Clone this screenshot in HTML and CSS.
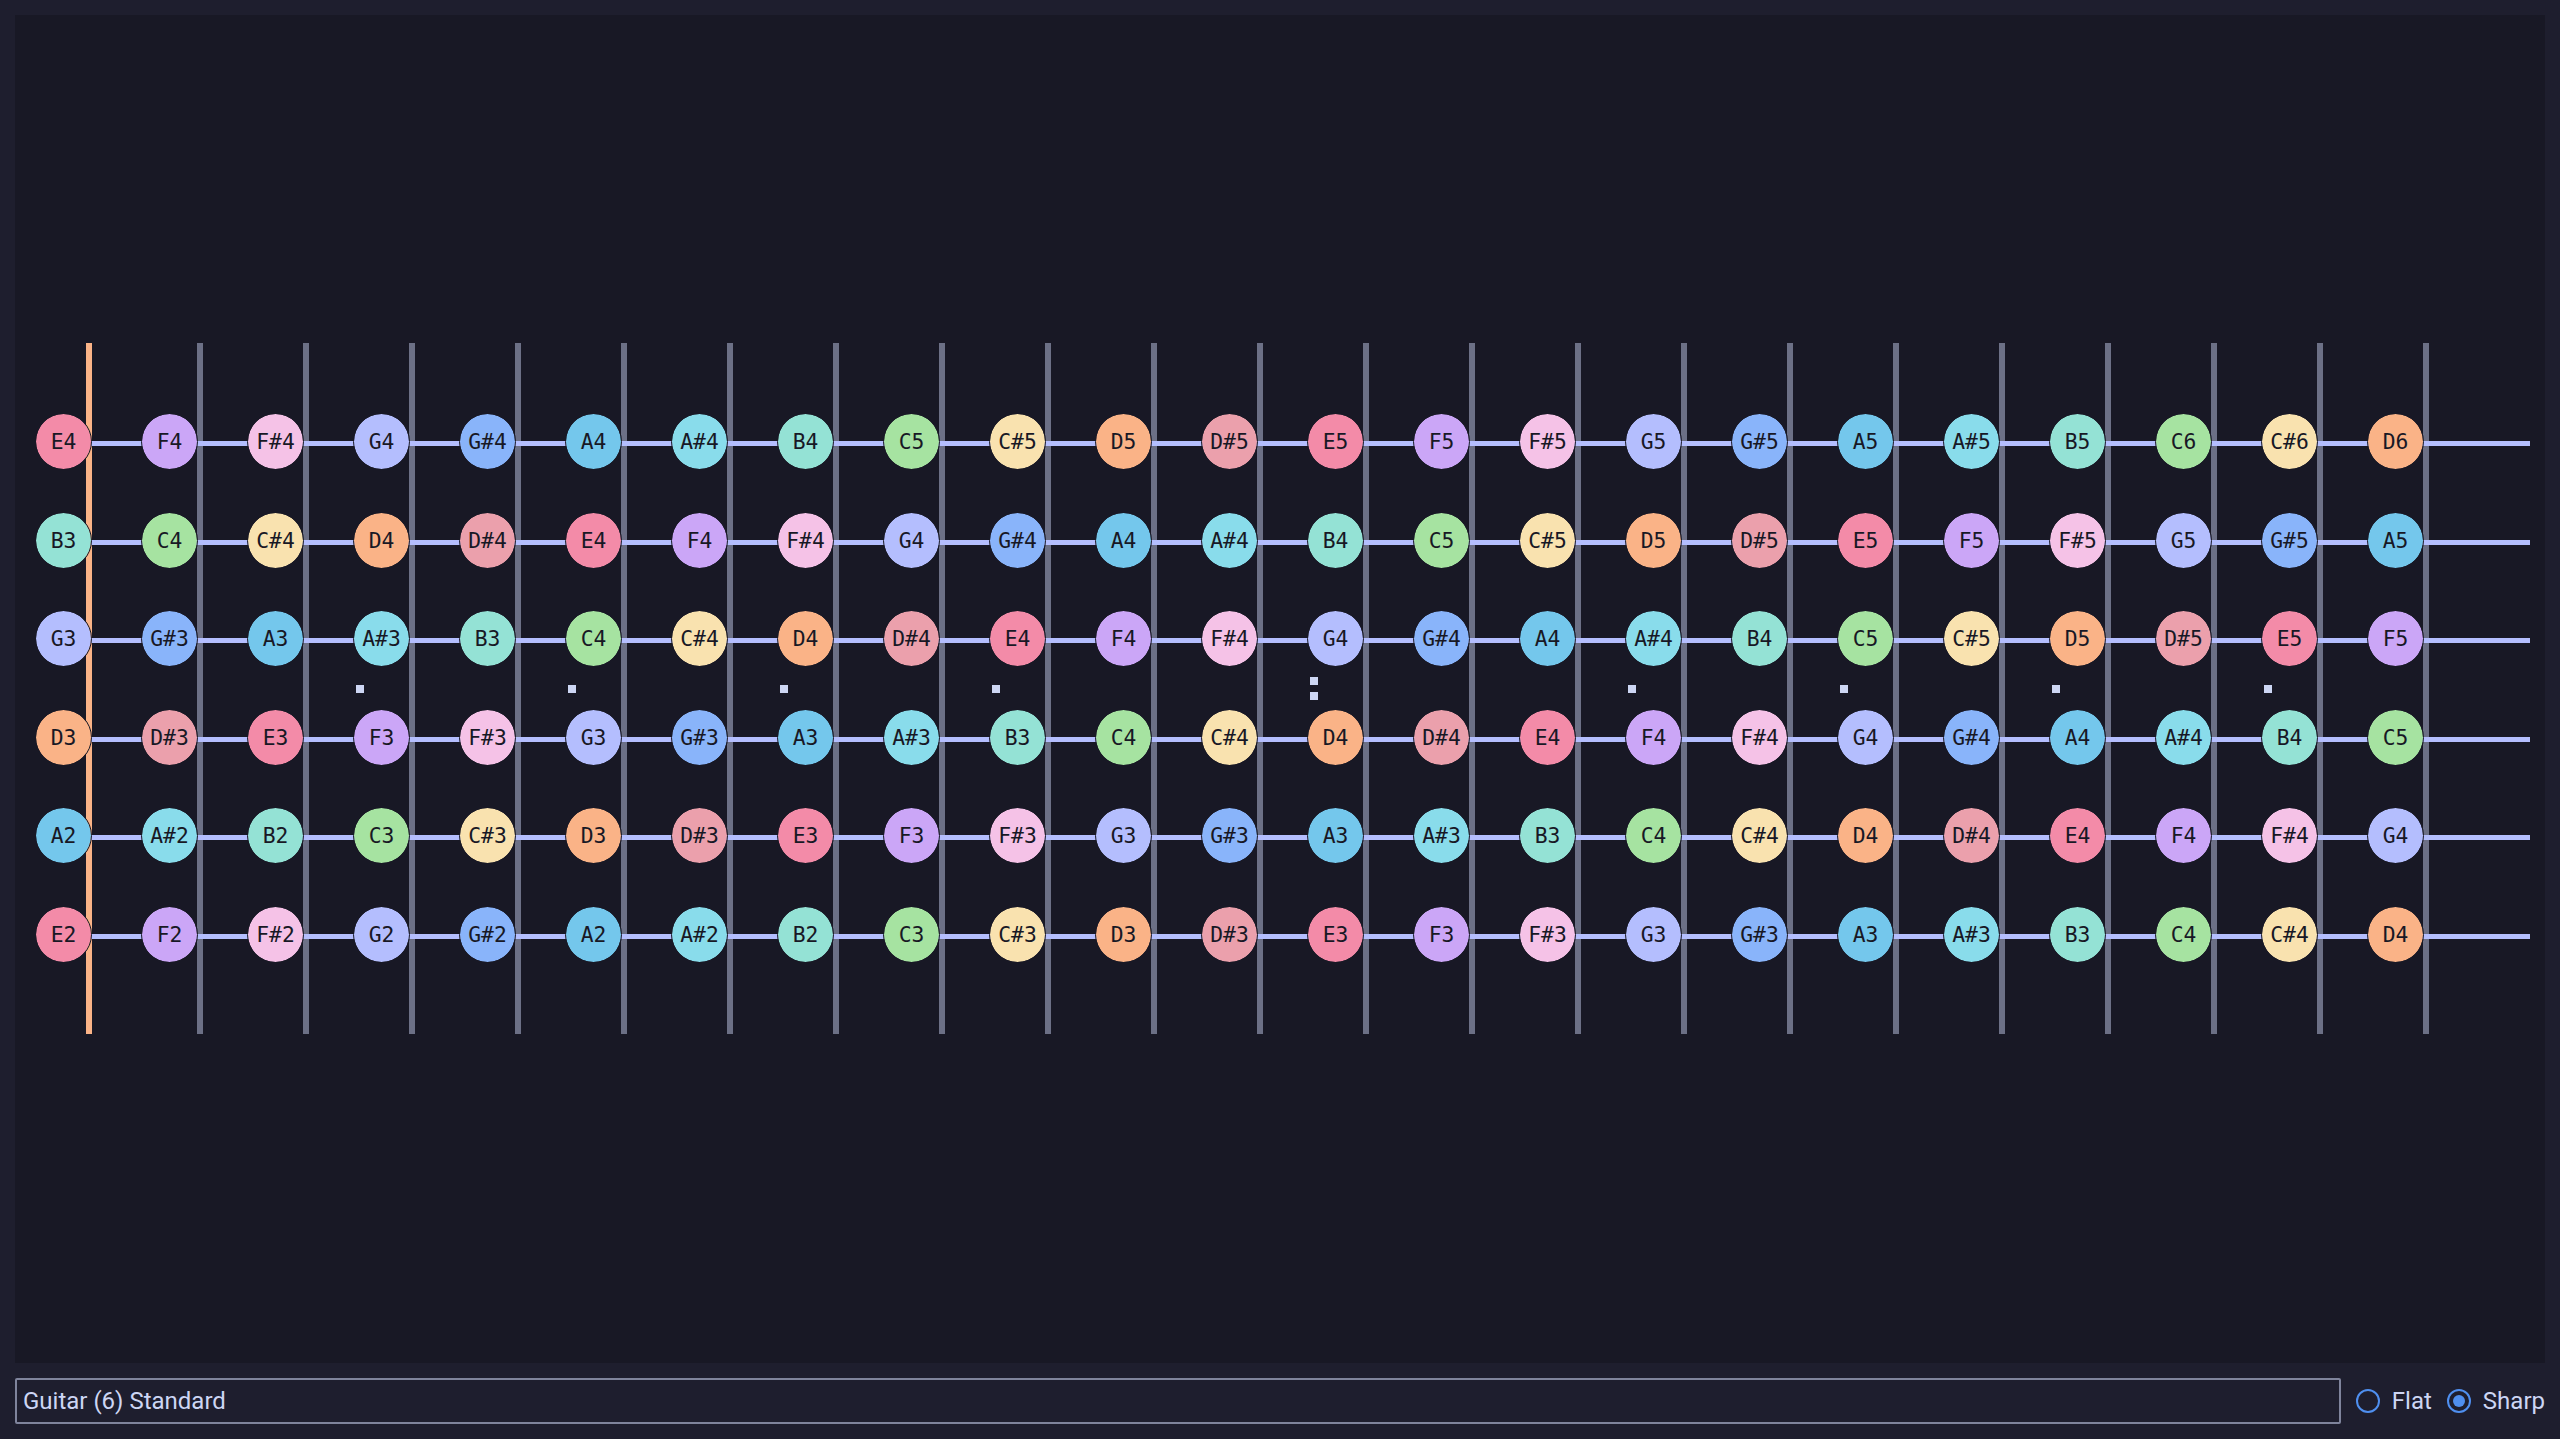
FILE: index.html
```html
<!DOCTYPE html>
<html lang="en">
<head>
    <meta charset="UTF-8">
    <meta name="viewport" content="width=device-width, initial-scale=1.0">
    <title>Fretboard</title>
    <link rel="stylesheet" href="styles.css">
</head>
<body>
    <div class="panel">
        <div class="fretboard">
            <div class="frets">
                <i class="nut"></i>
                <i></i><i></i><i></i><i></i><i></i><i></i><i></i><i></i><i></i><i></i><i></i>
                <i></i><i></i><i></i><i></i><i></i><i></i><i></i><i></i><i></i><i></i><i></i>
            </div>
            <div class="inlays">
                <div class="inlay at-3"><i></i></div>
                <div class="inlay at-5"><i></i></div>
                <div class="inlay at-7"><i></i></div>
                <div class="inlay at-9"><i></i></div>
                <div class="inlay at-12"><i></i><i></i></div>
                <div class="inlay at-15"><i></i></div>
                <div class="inlay at-17"><i></i></div>
                <div class="inlay at-19"><i></i></div>
                <div class="inlay at-21"><i></i></div>
            </div>
            <div class="string">
                <span class="note e">E4</span><span class="note f">F4</span><span class="note fs">F#4</span><span class="note g">G4</span><span class="note gs">G#4</span><span class="note a">A4</span><span class="note as">A#4</span><span class="note b">B4</span><span class="note c">C5</span><span class="note cs">C#5</span><span class="note d">D5</span><span class="note ds">D#5</span><span class="note e">E5</span><span class="note f">F5</span><span class="note fs">F#5</span><span class="note g">G5</span><span class="note gs">G#5</span><span class="note a">A5</span><span class="note as">A#5</span><span class="note b">B5</span><span class="note c">C6</span><span class="note cs">C#6</span><span class="note d">D6</span>
            </div>
            <div class="string">
                <span class="note b">B3</span><span class="note c">C4</span><span class="note cs">C#4</span><span class="note d">D4</span><span class="note ds">D#4</span><span class="note e">E4</span><span class="note f">F4</span><span class="note fs">F#4</span><span class="note g">G4</span><span class="note gs">G#4</span><span class="note a">A4</span><span class="note as">A#4</span><span class="note b">B4</span><span class="note c">C5</span><span class="note cs">C#5</span><span class="note d">D5</span><span class="note ds">D#5</span><span class="note e">E5</span><span class="note f">F5</span><span class="note fs">F#5</span><span class="note g">G5</span><span class="note gs">G#5</span><span class="note a">A5</span>
            </div>
            <div class="string">
                <span class="note g">G3</span><span class="note gs">G#3</span><span class="note a">A3</span><span class="note as">A#3</span><span class="note b">B3</span><span class="note c">C4</span><span class="note cs">C#4</span><span class="note d">D4</span><span class="note ds">D#4</span><span class="note e">E4</span><span class="note f">F4</span><span class="note fs">F#4</span><span class="note g">G4</span><span class="note gs">G#4</span><span class="note a">A4</span><span class="note as">A#4</span><span class="note b">B4</span><span class="note c">C5</span><span class="note cs">C#5</span><span class="note d">D5</span><span class="note ds">D#5</span><span class="note e">E5</span><span class="note f">F5</span>
            </div>
            <div class="string">
                <span class="note d">D3</span><span class="note ds">D#3</span><span class="note e">E3</span><span class="note f">F3</span><span class="note fs">F#3</span><span class="note g">G3</span><span class="note gs">G#3</span><span class="note a">A3</span><span class="note as">A#3</span><span class="note b">B3</span><span class="note c">C4</span><span class="note cs">C#4</span><span class="note d">D4</span><span class="note ds">D#4</span><span class="note e">E4</span><span class="note f">F4</span><span class="note fs">F#4</span><span class="note g">G4</span><span class="note gs">G#4</span><span class="note a">A4</span><span class="note as">A#4</span><span class="note b">B4</span><span class="note c">C5</span>
            </div>
            <div class="string">
                <span class="note a">A2</span><span class="note as">A#2</span><span class="note b">B2</span><span class="note c">C3</span><span class="note cs">C#3</span><span class="note d">D3</span><span class="note ds">D#3</span><span class="note e">E3</span><span class="note f">F3</span><span class="note fs">F#3</span><span class="note g">G3</span><span class="note gs">G#3</span><span class="note a">A3</span><span class="note as">A#3</span><span class="note b">B3</span><span class="note c">C4</span><span class="note cs">C#4</span><span class="note d">D4</span><span class="note ds">D#4</span><span class="note e">E4</span><span class="note f">F4</span><span class="note fs">F#4</span><span class="note g">G4</span>
            </div>
            <div class="string">
                <span class="note e">E2</span><span class="note f">F2</span><span class="note fs">F#2</span><span class="note g">G2</span><span class="note gs">G#2</span><span class="note a">A2</span><span class="note as">A#2</span><span class="note b">B2</span><span class="note c">C3</span><span class="note cs">C#3</span><span class="note d">D3</span><span class="note ds">D#3</span><span class="note e">E3</span><span class="note f">F3</span><span class="note fs">F#3</span><span class="note g">G3</span><span class="note gs">G#3</span><span class="note a">A3</span><span class="note as">A#3</span><span class="note b">B3</span><span class="note c">C4</span><span class="note cs">C#4</span><span class="note d">D4</span>
            </div>
        </div>
    </div>
    <div class="toolbar">
        <input class="tuning" type="text" value="Guitar (6) Standard">
        <label class="radio"><span class="radio-mark"></span>Flat</label>
        <label class="radio checked"><span class="radio-mark"></span>Sharp</label>
    </div>
</body>
</html>
```
FILE: styles.css
```css
html, body {
    margin: 0;
    height: 100%;
}
body {
    box-sizing: border-box;
    display: flex;
    flex-direction: column;
    gap: 15px;
    padding: 15px;
    background-color: #1e1e2e;
    color: #cdd6f4;
    font-family: Roboto, sans-serif;
    font-size: 24px;
}
.panel {
    flex: 1;
    display: flex;
    align-items: center;
    padding: 0 0 1px 20px;
    background-color: #181825;
}
.fretboard {
    position: relative;
    width: 2495px;
    padding: 50px 0;
}
.frets {
    position: absolute;
    inset: 0 0 0 51px;
    display: flex;
    gap: 100px;
}
.frets i {
    flex: none;
    width: 6px;
    background-color: #6c7086;
}
.frets .nut {
    margin-right: 5px;
    background-color: #fab387;
}
.inlays {
    position: absolute;
    inset: 0;
    display: grid;
    grid-template-columns: repeat(23, 106px);
    align-items: center;
}
.inlay {
    grid-row: 1;
    display: flex;
    flex-direction: column;
    gap: 7px;
    margin-left: 3px;
}
.inlay i {
    width: 8px;
    height: 8px;
    background-color: #cdd6f4;
}
.at-3 { grid-column: 4; }
.at-5 { grid-column: 6; }
.at-7 { grid-column: 8; }
.at-9 { grid-column: 10; }
.at-12 { grid-column: 13; }
.at-15 { grid-column: 16; }
.at-17 { grid-column: 18; }
.at-19 { grid-column: 20; }
.at-21 { grid-column: 22; }
.string {
    position: relative;
    display: flex;
    align-items: center;
    gap: 49px;
    height: 98.5px;
}
.string::before {
    content: "";
    position: absolute;
    left: 56px;
    right: 0;
    top: calc(50% - 1px);
    height: 5px;
    background-color: #b4befe;
}
.note {
    position: relative;
    box-sizing: border-box;
    flex: none;
    display: flex;
    align-items: center;
    justify-content: center;
    width: 57px;
    height: 57px;
    margin-top: -1px;
    border: 1px solid #181825;
    border-radius: 50%;
    background-clip: padding-box;
    color: #181825;
    font-family: "DejaVu Sans Mono", monospace;
    font-size: 21.33px;
}
.e { background-color: #f38ba8; }
.f { background-color: #cba6f7; }
.fs { background-color: #f5c2e7; }
.g { background-color: #b4befe; }
.gs { background-color: #89b4fa; }
.a { background-color: #74c7ec; }
.as { background-color: #89dceb; }
.b { background-color: #94e2d5; }
.c { background-color: #a6e3a1; }
.cs { background-color: #f9e2af; }
.d { background-color: #fab387; }
.ds { background-color: #eba0ac; }
.toolbar {
    display: flex;
    align-items: center;
    gap: 15px;
}
.tuning {
    flex: 1;
    box-sizing: border-box;
    height: 46px;
    padding: 0 6px;
    border: 2px solid #7f849c;
    border-radius: 2px;
    outline: none;
    background-color: #1e1e2e;
    color: #cdd6f4;
    font: inherit;
}
.radio {
    display: flex;
    align-items: center;
    gap: 12px;
}
.radio-mark {
    box-sizing: border-box;
    display: flex;
    align-items: center;
    justify-content: center;
    width: 24px;
    height: 24px;
    border: 2px solid #4f8fef;
    border-radius: 50%;
}
.checked .radio-mark::after {
    content: "";
    width: 12px;
    height: 12px;
    border-radius: 50%;
    background-color: #4f8fef;
}
```
